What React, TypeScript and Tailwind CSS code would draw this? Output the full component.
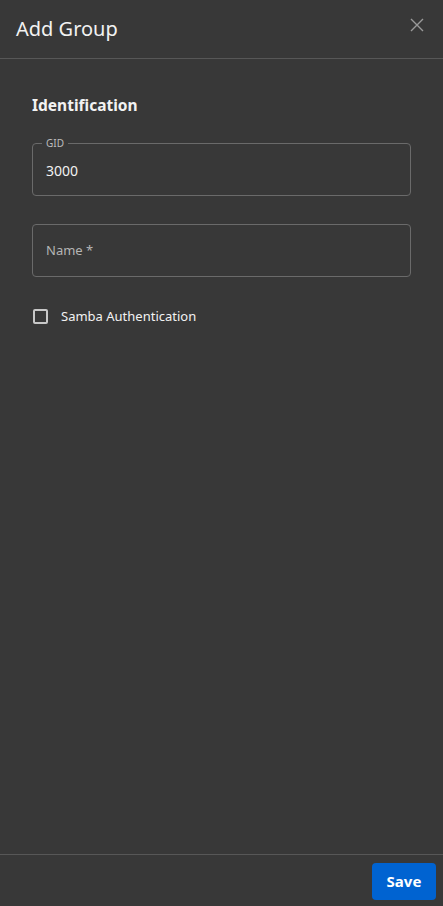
import { useState } from "react";

const App = () => {
  const [gid, setGid] = useState("3000");
  const [name, setName] = useState("");
  const [samba, setSamba] = useState(false);

  return (
    <div
      className="h-screen flex flex-col bg-[#383838] text-[#f2f2f2]"
      style={{ fontFamily: '"Noto Sans", "Open Sans", sans-serif' }}
    >
      <header className="h-[59px] shrink-0 flex items-center justify-between pl-4 pr-[19px] border-b border-[#575757]">
        <h2 className="text-[20px] font-normal">Add Group</h2>
        <button className="text-[#9a9a9a] -mt-[9px]">
          <svg width="14" height="14" viewBox="0 0 14 14" fill="none" stroke="currentColor" strokeWidth="1.4">
            <path d="M1 1l12 12M13 1L1 13" />
          </svg>
        </button>
      </header>

      <div className="flex-1 px-8 pt-[34px]">
        <h3 className="text-[15.5px] font-bold leading-6">Identification</h3>

        <div className="relative mt-[26px] border border-[#6a6a6a] rounded-[4px] h-[53px] flex items-center px-[13px]">
          <span className="absolute -top-[8px] left-[9px] px-[4px] bg-[#383838] text-[10px] text-[#bdbdbd] leading-[14px]">
            GID
          </span>
          <input
            value={gid}
            onChange={(e) => setGid(e.target.value)}
            className="w-full bg-transparent outline-none text-[14px] mt-[1px]"
          />
        </div>

        <div className="mt-[28px] border border-[#6a6a6a] rounded-[4px] h-[53px] flex items-center px-[13px]">
          <input
            value={name}
            onChange={(e) => setName(e.target.value)}
            placeholder="Name *"
            className="w-full bg-transparent outline-none text-[13px] placeholder:text-[#b5b5b5]"
          />
        </div>

        <label className="mt-[30px] flex items-center gap-[13px] cursor-pointer">
          <input
            type="checkbox"
            checked={samba}
            onChange={(e) => setSamba(e.target.checked)}
            className="appearance-none w-[15px] h-[15px] border-2 border-[#c8c8c8] rounded-[2px] ml-[1px]"
          />
          <span className="text-[13px]">Samba Authentication</span>
        </label>
      </div>

      <footer className="h-[52px] shrink-0 border-t border-[#575757] flex items-center justify-end pr-[7px] pt-[1px]">
        <button className="bg-[#0063d1] text-white font-bold text-[15px] rounded-[4px] w-[64px] h-[37px]">
          Save
        </button>
      </footer>
    </div>
  );
};

export default App;
